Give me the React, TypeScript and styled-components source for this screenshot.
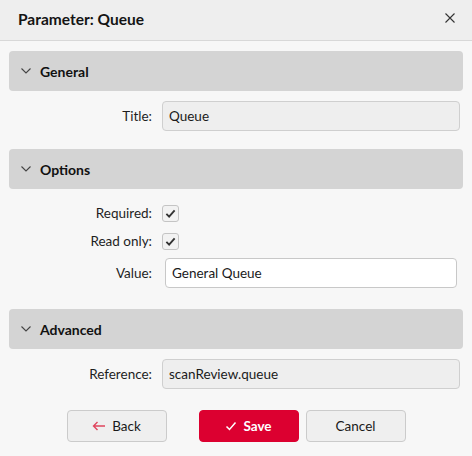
import React from "react";
import styled, { createGlobalStyle } from "styled-components";

const GlobalStyle = createGlobalStyle`
  html, body {
    margin: 0;
    padding: 0;
    background: #f7f7f7;
  }
  body {
    font-family: Lato, "Noto Sans", sans-serif;
    font-size: 13.5px;
    color: #1a1a1a;
  }
`;

const Dialog = styled.div`
  width: 472px;
  height: 456px;
  background: #f7f7f7;
  display: flex;
  flex-direction: column;
  overflow: hidden;
`;

const Header = styled.div`
  height: 40px;
  display: flex;
  align-items: center;
  justify-content: space-between;
  padding: 0 14px 0 18px;
  background: #eeeeee;
  border-bottom: 1px solid #d8d8d8;
`;

const HeaderTitle = styled.h1`
  margin: 0 0 2px;
  font-size: 15.5px;
  font-weight: 700;
  color: #141414;
`;

const CloseButton = styled.button`
  border: 0;
  background: none;
  padding: 0;
  width: 16px;
  height: 16px;
  display: flex;
  align-items: center;
  justify-content: center;
  color: #333;
  margin-bottom: 4px;
`;

const Body = styled.div`
  padding: 10px 9px 0;
  display: flex;
  flex-direction: column;
`;

const SectionHeader = styled.div`
  height: 40px;
  display: flex;
  align-items: center;
  gap: 9px;
  padding-left: 12px;
  background: #d4d4d4;
  border-radius: 4px;
  font-weight: 700;
  font-size: 14px;
  color: #111;
`;

const SectionContent = styled.div`
  padding: 10px 3px 18px 0;
  display: grid;
  grid-template-columns: 143px 1fr;
  column-gap: 10px;
  align-items: center;
`;

const Label = styled.label`
  text-align: right;
  color: #1e1e1e;
`;

const CheckRow = styled.div`
  height: 28px;
  display: flex;
  align-items: center;
`;

const TextInput = styled.input<{ $readOnly?: boolean }>`
  box-sizing: border-box;
  width: 100%;
  height: 30px;
  padding: 0 6px;
  border: 1px solid ${(p) => (p.$readOnly ? "#cfcfcf" : "#c8c8c8")};
  border-radius: 4px;
  background: ${(p) => (p.$readOnly ? "#eeeeee" : "#ffffff")};
  font: inherit;
  color: #1a1a1a;
  outline: none;
`;

const InputWrap = styled.div`
  padding: 3px;
`;

const Checkbox = styled.span`
  box-sizing: border-box;
  width: 17px;
  height: 17px;
  border: 1px solid #c4c4c4;
  border-radius: 3px;
  background: #f2f2f2;
  display: flex;
  align-items: center;
  justify-content: center;
`;

const Footer = styled.div`
  display: flex;
  justify-content: center;
  padding-top: 3px;
`;

const Button = styled.button<{ $primary?: boolean }>`
  box-sizing: border-box;
  width: 100px;
  height: 32px;
  display: flex;
  align-items: center;
  justify-content: center;
  gap: 6px;
  border-radius: 4px;
  font: inherit;
  font-weight: ${(p) => (p.$primary ? 700 : 400)};
  border: 1px solid ${(p) => (p.$primary ? "#dc0030" : "#cbcbcb")};
  background: ${(p) => (p.$primary ? "#dc0030" : "#efefef")};
  color: ${(p) => (p.$primary ? "#ffffff" : "#1a1a1a")};
`;

const BackButton = styled(Button)`
  margin-right: 32px;
`;

const SaveButton = styled(Button)`
  margin-right: 7px;
`;

const Chevron = () => (
  <svg width="10" height="6" viewBox="0 0 10 6" fill="none">
    <polyline points="0.5,0.5 5,5 9.5,0.5" stroke="#444" strokeWidth="1.1" />
  </svg>
);

const CheckMark = ({ color, size = 11, weight = 2 }: { color: string; size?: number; weight?: number }) => (
  <svg width={size} height={size} viewBox="0 0 12 12" fill="none">
    <polyline points="1.5,6.5 4.5,9.5 10.5,2.5" stroke={color} strokeWidth={weight} />
  </svg>
);

function Section({ title, children }: { title: string; children: React.ReactNode }) {
  return (
    <>
      <SectionHeader>
        <Chevron />
        {title}
      </SectionHeader>
      <SectionContent>{children}</SectionContent>
    </>
  );
}

export default function App() {
  return (
    <>
      <GlobalStyle />
      <Dialog>
        <Header>
          <HeaderTitle>Parameter: Queue</HeaderTitle>
          <CloseButton aria-label="Close">
            <svg width="10" height="10" viewBox="0 0 10 10">
              <path d="M0.5 0.5 L9.5 9.5 M9.5 0.5 L0.5 9.5" stroke="#333" strokeWidth="1.1" />
            </svg>
          </CloseButton>
        </Header>
        <Body>
          <Section title="General">
            <Label>Title:</Label>
            <TextInput $readOnly readOnly value="Queue" />
          </Section>
          <Section title="Options">
            <Label>Required:</Label>
            <CheckRow>
              <Checkbox>
                <CheckMark color="#333" />
              </Checkbox>
            </CheckRow>
            <Label>Read only:</Label>
            <CheckRow>
              <Checkbox>
                <CheckMark color="#333" />
              </Checkbox>
            </CheckRow>
            <Label>Value:</Label>
            <InputWrap>
              <TextInput defaultValue="General Queue" />
            </InputWrap>
          </Section>
          <Section title="Advanced">
            <Label>Reference:</Label>
            <TextInput $readOnly readOnly value="scanReview.queue" />
          </Section>
          <Footer>
            <BackButton>
              <svg width="14" height="10" viewBox="0 0 14 10" fill="none">
                <path d="M13 5 H1.5 M5.5 1 L1.5 5 L5.5 9" stroke="#e0455e" strokeWidth="1.4" />
              </svg>
              Back
            </BackButton>
            <SaveButton $primary>
              <CheckMark color="#fff" size={12} weight={1.5} />
              Save
            </SaveButton>
            <Button>Cancel</Button>
          </Footer>
        </Body>
      </Dialog>
    </>
  );
}
